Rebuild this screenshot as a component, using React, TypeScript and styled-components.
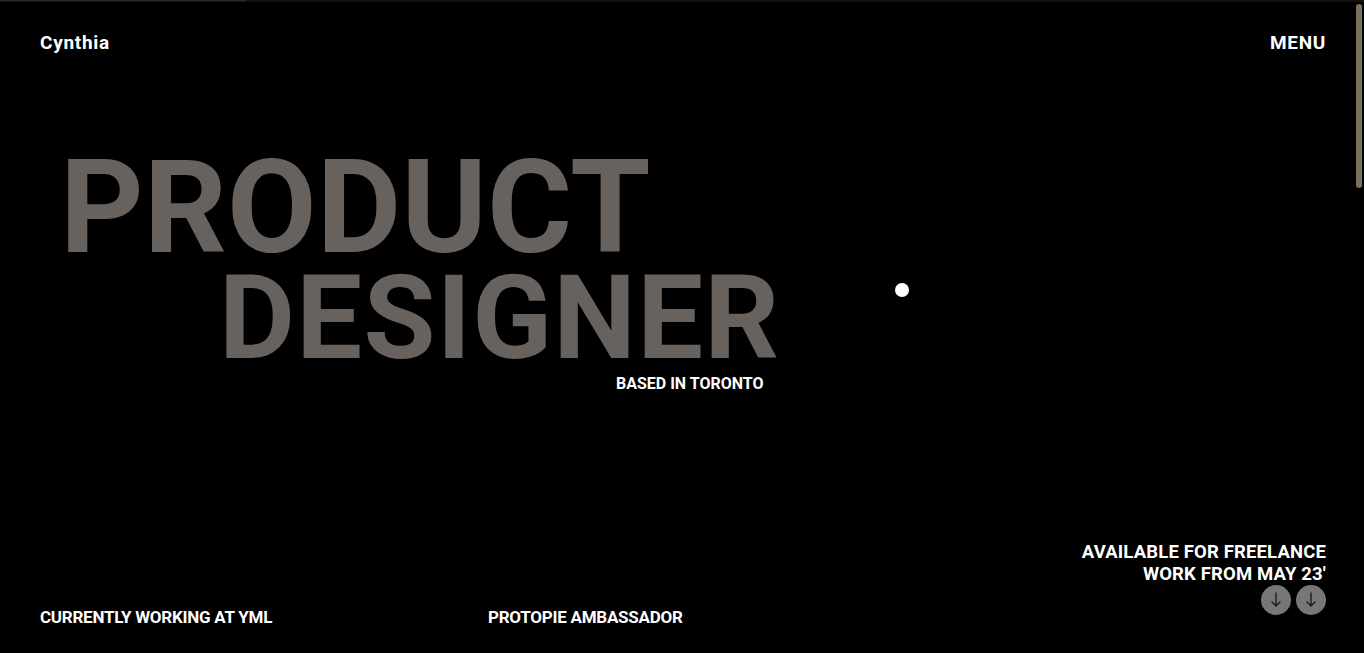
import React from "react";
import styled, { createGlobalStyle } from "styled-components";

const Global = createGlobalStyle`
  html, body { margin: 0; padding: 0; background: #000; }
  body { font-family: Roboto, "Liberation Sans", Arial, sans-serif; color: #fff; overflow: hidden; }
  * { box-sizing: border-box; }
`;

const Page = styled.div`
  position: relative;
  width: 100%;
  height: 653px;
  background: #000;
  display: flex;
  flex-direction: column;
  overflow: hidden;
`;

const TopLine = styled.div`
  height: 2px;
  background: linear-gradient(90deg, #2a2a2a 0 18%, #111 18% 100%);
  border-bottom: 1px solid #2c0608;
  flex: none;
`;

const Header = styled.header`
  display: flex;
  justify-content: space-between;
  align-items: flex-start;
  padding: 30px 38px 0 40px;
`;

const Logo = styled.a`
  font-size: 19px;
  font-weight: 700;
  letter-spacing: 0.7px;
  color: #fff;
  text-decoration: none;
  line-height: 22px;
`;

const MenuButton = styled.button`
  background: none;
  border: 0;
  padding: 0;
  color: #fff;
  font-family: inherit;
  font-size: 19px;
  font-weight: 700;
  letter-spacing: 0.7px;
  line-height: 22px;
`;

const Hero = styled.main`
  flex: 1;
  display: flex;
  flex-direction: column;
  padding-top: 96px;
`;

const Title = styled.h1`
  margin: 0;
  font-weight: 700;
  color: #68625f;
  display: flex;
  flex-direction: column;
`;

const TitleLine = styled.span<{ $size: number; $indent: number; $lh: number; $track: number }>`
  display: block;
  font-size: ${(p) => p.$size}px;
  line-height: ${(p) => p.$lh}px;
  padding-left: ${(p) => p.$indent}px;
  letter-spacing: ${(p) => p.$track}px;
  white-space: nowrap;
`;

const Location = styled.p`
  margin: 5px 0 0 616px;
  font-size: 16px;
  font-weight: 700;
  line-height: 18px;
  letter-spacing: 0;
`;

const Footer = styled.footer`
  display: grid;
  grid-template-columns: 448px 1fr auto;
  align-items: end;
  padding: 0 38px 26px 40px;
`;

const FootText = styled.p`
  margin: 0;
  font-size: 17px;
  font-weight: 700;
  line-height: 20px;
  letter-spacing: -0.25px;
  white-space: nowrap;
`;

const Availability = styled.div`
  display: flex;
  flex-direction: column;
  align-items: flex-end;
  margin-bottom: 12px;
`;

const AvailText = styled.p`
  margin: 0;
  text-align: right;
  font-size: 18.5px;
  font-weight: 700;
  line-height: 22px;
  letter-spacing: 0.15px;
`;

const ArrowRow = styled.div`
  display: flex;
  gap: 5px;
  margin-top: 0;
`;

const ArrowButton = styled.button`
  width: 30px;
  height: 30px;
  border-radius: 50%;
  border: 0;
  padding: 0;
  background: #777777;
  display: grid;
  place-items: center;
`;

const Dot = styled.div`
  position: absolute;
  left: 895px;
  top: 283px;
  width: 14px;
  height: 14px;
  border-radius: 50%;
  background: #fff;
`;

const ScrollThumb = styled.div`
  position: absolute;
  right: 2px;
  top: 4px;
  width: 6px;
  height: 184px;
  border-radius: 3px;
  background: #7c715d;
`;

const Arrow = () => (
  <svg width="30" height="30" viewBox="0 0 30 30" fill="none">
    <path d="M15 8v13M11 17l4 4 4-4" stroke="#1e1e1e" strokeWidth="1.4" strokeLinecap="round" strokeLinejoin="round" />
  </svg>
);

export default function App() {
  return (
    <>
      <Global />
      <Page>
        <TopLine />
        <Header>
          <Logo href="#">Cynthia</Logo>
          <MenuButton>MENU</MenuButton>
        </Header>
        <Hero>
          <Title>
            <TitleLine $size={130} $indent={60} $lh={116} $track={0}>PRODUCT</TitleLine>
            <TitleLine $size={117} $indent={219} $lh={104} $track={1.3}>DESIGNER</TitleLine>
          </Title>
          <Location>BASED IN TORONTO</Location>
        </Hero>
        <Footer>
          <FootText>CURRENTLY WORKING AT YML</FootText>
          <FootText>PROTOPIE AMBASSADOR</FootText>
          <Availability>
            <AvailText>AVAILABLE FOR FREELANCE</AvailText>
            <AvailText>WORK FROM MAY 23'</AvailText>
            <ArrowRow>
              <ArrowButton aria-label="scroll down"><Arrow /></ArrowButton>
              <ArrowButton aria-label="next"><Arrow /></ArrowButton>
            </ArrowRow>
          </Availability>
        </Footer>
        <Dot />
        <ScrollThumb />
      </Page>
    </>
  );
}
